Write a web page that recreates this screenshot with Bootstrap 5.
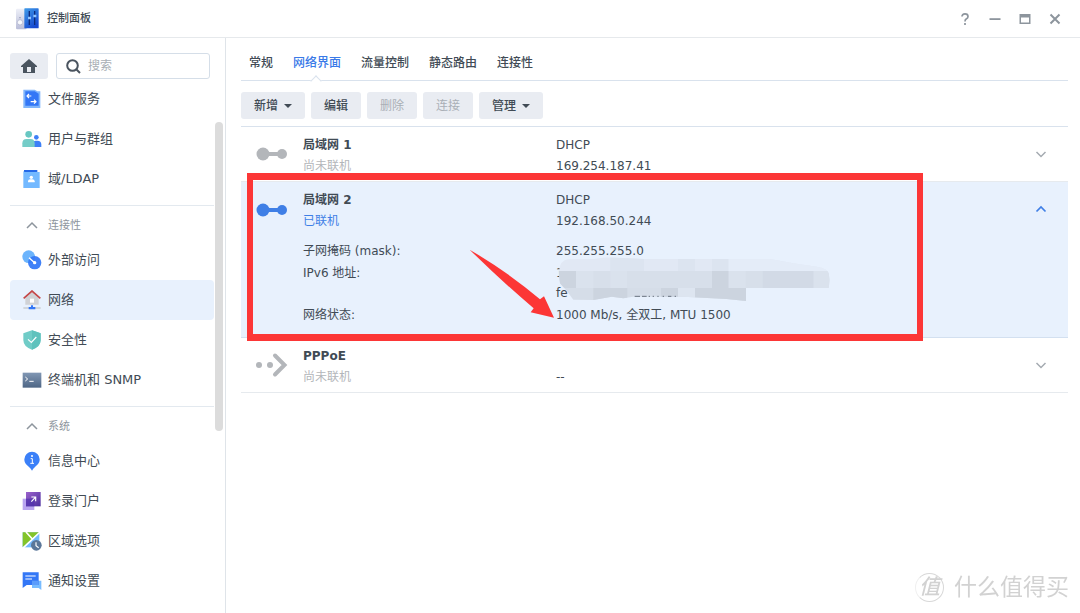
<!DOCTYPE html>
<html lang="zh-CN">
<head>
<meta charset="utf-8">
<meta name="viewport" content="width=device-width, initial-scale=1">
<title>控制面板</title>
<link href="https://cdn.jsdelivr.net/npm/bootstrap@5.3.0/dist/css/bootstrap.min.css" rel="stylesheet">
<style>
  body { font-family: "DejaVu Sans", "Noto Sans CJK SC", sans-serif; font-size: 12px; line-height: 20px; color: #414b55; background: #fff; }
  svg { display: block; flex: none; }
  button { color: inherit; }
  a { color: inherit; text-decoration: none; }

  /* title bar */
  .titlebar { height: 38px; border-bottom: 1px solid #e6e9ec; padding: 0 15px; }
  .titlebar h1 { font-size: 11px; font-weight: 500; line-height: 20px; }
  .win-btns { gap: 10px; }
  .win-btn { width: 20px; height: 20px; padding: 0; border: 0; background: none; color: #8d959d; display: grid; place-items: center; }

  /* sidebar */
  .sidebar { width: 226px; border-right: 1px solid #dfe4e9; padding: 15px 11px 12px 10px; }
  .home-btn { width: 38px; height: 26px; border: 0; border-radius: 3px; background: #e9ecf2; padding: 0; display: grid; place-items: center; flex: none; }
  .search-box { height: 26px; border: 1px solid #d5dee8; border-radius: 3px; padding: 0 9px; margin-right: 4px; gap: 7px; min-width: 0; }
  .search-box input { border: 0; outline: 0; padding: 0; width: 100%; min-width: 0; font-size: 12px; background: none; }
  .search-box input::placeholder { color: #a9afb5; opacity: 1; }
  .side-item { height: 40px; padding: 0 12px; gap: 6px; border-radius: 4px; font-size: 13px; }
  .side-item.current { background: #e8f1fd; }
  .side-group { border-top: 1px solid #e3e9ef; margin-top: 6px; padding-top: 2px; }
  .side-toggle { height: 32px; padding: 4px 15px 0; gap: 9px; border: 0; background: none; font-size: 11px; color: #8d959d; }
  .scroll-thumb { right: 2px; top: 84px; width: 8px; height: 309px; border-radius: 4px; background: #dcdcdc; }

  /* main pane */
  .pane { padding: 0 12px 0 15px; }
  .tabs { height: 43px; border-bottom: 1px solid #d9e2ed; padding: 0 8px; gap: 20px; font-size: 12px; font-weight: 500; }
  .tabs a { line-height: 20px; padding: 15px 0 7px; }
  .tabs a.current { color: #3a7ae8; }
  .tabs a.current::after { content: ""; position: absolute; left: 50%; bottom: -5px; width: 8px; height: 8px; margin-left: -5px; background: #fff; border: solid #d9e2ed; border-width: 1px 0 0 1px; transform: rotate(45deg); }
  .tools { padding: 11px 0 7px; gap: 6px; border-bottom: 1px solid #d9e2ed; }
  .tool-btn { height: 27px; padding: 0 13px; border: 0; border-radius: 3px; background: #e9ecf2; color: #414b55; font-size: 12px; line-height: 20px; font-weight: 500; }
  .tool-btn:disabled { color: #a9afb6; background: #e9ecf2; opacity: 1; font-weight: 400; }
  .tool-btn.dropdown-toggle::after { margin-left: 6px; vertical-align: 2px; border-width: 4px 4px 0; }

  .iface { border-bottom: 1px solid #e6eaee; padding: 8px 0 4px; }
  .iface.open { background: #e8f1fd; border-color: #d3e0f0; padding-bottom: 12px; }
  .iface-grid { display: grid; grid-template-columns: 62px 253fr 512fr; line-height: 21px; }
  .iface h2 { font-size: 12px; line-height: 21px; font-weight: 700; }
  .iface-icon { margin: 4px 0 0 15px; }
  .off { color: #b3b6ba; }
  .chev { border: 0; background: none; padding: 0; width: 14px; height: 14px; margin: 12px 20px 0 0; color: #a5abb1; }
  .on { color: #3f7fe6; }
  .details { margin: 9px 0 0; line-height: 20px; row-gap: 2px; }
  .details dt { grid-column: 2; font-weight: 400; }
  .details dd { grid-column: 3; margin: 0; }

  /* annotations lying over the list */
  .marker { left: 6px; right: 145px; top: -9px; bottom: -4px; border: 6px solid #fc3636; border-width: 7px 6px; z-index: 2; pointer-events: none; }
  .arrow { left: -87px; top: -56px; z-index: 2; }
  .smudge { left: 2px; top: -8px; }
  .watermark { right: 11px; bottom: 10px; gap: 10px; color: #d2d2d2; font-size: 23px; line-height: 32px; }
  .watermark-seal { width: 29px; height: 29px; border: 1px solid #d8d8d8; border-left-color: #f0f0f0; border-radius: 50%; font-size: 21px; line-height: 26px; font-style: italic; font-weight: 500; }
</style>
</head>
<body class="d-flex flex-column min-vh-100">

<header class="titlebar d-flex align-items-center">
  <svg width="24" height="24" viewBox="0 0 72 72" class="me-2" aria-hidden="true">
    <defs><linearGradient id="gPanel" x2="0.6" y2="1"><stop offset="0" stop-color="#3f9be8"/><stop offset="1" stop-color="#1648d0"/></linearGradient>
    <linearGradient id="gSide" x2="0" y2="1"><stop offset="0" stop-color="#eef0f8"/><stop offset="1" stop-color="#b9bdd8"/></linearGradient></defs>
    <rect x="3" y="5" width="32" height="62" rx="4" fill="url(#gSide)"/>
    <rect x="28" y="4" width="43" height="60" rx="2" fill="url(#gPanel)"/>
    <circle cx="15" cy="46" r="8" fill="#f7f8fc" stroke="#a9adc8" stroke-width="2"/><circle cx="15" cy="32" r="2" fill="#8085a8"/>
    <path d="M43 12v42M59 12v42" stroke="#0c2c7c" stroke-width="4"/>
    <path d="M39 33h9M55 27h9" stroke="#8fc4ff" stroke-width="7"/>
  </svg>
  <h1 class="m-0">控制面板</h1>
  <div class="win-btns d-flex ms-auto">
    <button class="win-btn" aria-label="帮助"><svg width="12" height="12" viewBox="0 0 12 12" fill="none" stroke="currentColor" stroke-width="1.7"><path d="M3 3.600Q3 .9 6 .9t3 2.600Q9 5 7.500 5.800 6 6.600 6 8.400M6 10v2"/></svg></button>
    <button class="win-btn" aria-label="最小化"><svg width="12" height="12" viewBox="0 0 12 12"><path d="M.5 5.200h11v1.800H.5z" fill="currentColor"/></svg></button>
    <button class="win-btn" aria-label="最大化"><svg width="12" height="12" viewBox="0 0 12 12"><path fill="currentColor" fill-rule="evenodd" d="M.5 1h11v10H.5zM2 4.500v5h8v-5z"/></svg></button>
    <button class="win-btn" aria-label="关闭"><svg width="12" height="12" viewBox="0 0 12 12" stroke="currentColor" stroke-width="2"><path d="M1.500 1.500l9 9M10.500 1.500l-9 9"/></svg></button>
  </div>
</header>

<div class="d-flex flex-grow-1">
  <aside class="sidebar flex-shrink-0 position-relative">
    <div class="d-flex">
      <button class="home-btn me-2" aria-label="主页"><svg width="16" height="14" viewBox="0 0 48 42"><path fill="#4a545f" fill-rule="evenodd" d="M24 0 48 21v3h-6v18H6V24H0v-3zM18 24v15h12V24z"/></svg></button>
      <label class="search-box d-flex align-items-center flex-grow-1">
        <svg width="15" height="15" viewBox="0 0 15 15" fill="none" stroke="#4a545f" stroke-width="2" role="img" aria-label="搜索"><circle cx="6.500" cy="6.500" r="5.300"/><path d="M10.500 10.500l3.500 3.500"/></svg>
        <input type="text" placeholder="搜索">
      </label>
    </div>

    <nav>
      <a href="#" class="side-item d-flex align-items-center">
        <svg width="20" height="20" viewBox="0 0 60 60"><path d="M4 2h34l8 5h9v50H4z" fill="#7fb5fb"/><path d="M10 7h28l12 7v36H10z" fill="#3377f6"/><path d="M28 21H16m5-6-6 6 6 6M26 38h15m-5-6 6 6-6 6" fill="none" stroke="#fff" stroke-width="3.500"/></svg>
        文件服务</a>
      <a href="#" class="side-item d-flex align-items-center">
        <svg width="20" height="20" viewBox="0 0 60 60"><circle cx="43" cy="25" r="7" fill="#3d80f7"/><path d="M30 54V46q0-11 12-11h4q12 0 12 12v7z" fill="#3d80f7"/><circle cx="20" cy="16" r="10" fill="#68c7c2"/><path d="M1 54V43q0-13 13-13h11q13 0 13 13v11z" fill="#75cdc8"/></svg>
        用户与群组</a>
      <a href="#" class="side-item d-flex align-items-center">
        <svg width="20" height="20" viewBox="0 0 60 60"><path d="M6 3h40v7H6z" fill="#2469e8"/><path d="M4 6q2 3 5 3h44v48H4z" fill="#73b9ff"/><circle cx="28" cy="25" r="5" fill="#fff"/><path d="M18 40v-3q0-6 7-6h6q7 0 7 6v3z" fill="#fff"/></svg>
        域/LDAP</a>

      <div class="side-group">
        <button class="side-toggle d-flex align-items-center w-100"><svg width="14" height="10" viewBox="0 0 14 10" fill="none" stroke="currentColor" stroke-width="1.500"><path d="M2 7l5-5 5 5"/></svg>连接性</button>
        <a href="#" class="side-item d-flex align-items-center">
          <svg width="20" height="20" viewBox="0 0 60 60"><circle cx="20" cy="20" r="19" fill="#6cb4fc"/><circle cx="38" cy="38" r="20" fill="#3377f6" fill-opacity=".93"/><circle cx="38" cy="38" r="5" fill="#fff"/><path d="M21 23l15 14" stroke="#fff" stroke-width="4"/></svg>
          外部访问</a>
        <a href="#" class="side-item current d-flex align-items-center" aria-current="page">
          <svg width="20" height="20" viewBox="0 0 60 60"><path d="M30 7 50 24v20H10V24z" fill="#d0d2d6"/><path d="M24 26h12v12H24z" fill="#fff"/><path d="M5 25 30 3l25 22" fill="none" stroke="#c44747" stroke-width="5"/><path d="M4 54h52" stroke="#ccd0d6" stroke-width="5"/><path d="M27 46h6v5h7v7H20v-7h7z" fill="#3377f6"/></svg>
          网络</a>
        <a href="#" class="side-item d-flex align-items-center">
          <svg width="20" height="20" viewBox="0 0 60 60"><path d="M30 1 56 10v20q0 20-26 29Q4 50 4 30V10z" fill="#70ccc7"/><path d="M30 1 56 10v20q0 20-26 29z" fill="#5fc2bd"/><path d="M18 28l10 9 15-16" fill="none" stroke="#fff" stroke-width="3.500"/></svg>
          安全性</a>
        <a href="#" class="side-item d-flex align-items-center">
          <svg width="20" height="20" viewBox="0 0 60 60"><defs><linearGradient id="gTerm" x2="0" y2="1"><stop offset="0" stop-color="#8197b4"/><stop offset="1" stop-color="#4e6685"/></linearGradient></defs><path d="M2 8h56v45H2z" fill="url(#gTerm)"/><path d="M10 21l7 6-7 6M22 34h13" fill="none" stroke="#fff" stroke-width="3"/></svg>
          终端机和 SNMP</a>
      </div>

      <div class="side-group">
        <button class="side-toggle d-flex align-items-center w-100"><svg width="14" height="10" viewBox="0 0 14 10" fill="none" stroke="currentColor" stroke-width="1.500"><path d="M2 7l5-5 5 5"/></svg>系统</button>
        <a href="#" class="side-item d-flex align-items-center">
          <svg width="20" height="20" viewBox="0 0 60 60"><path d="M30 2a23 23 0 0 1 23 23c0 12-8 18-14 23q-6 5-9 11-3-6-9-11C15 43 7 37 7 25A23 23 0 0 1 30 2z" fill="#3b80f8"/><circle cx="30" cy="15" r="3" fill="#fff"/><path d="M26 23h5v14M25 37h11" fill="none" stroke="#fff" stroke-width="3"/></svg>
          信息中心</a>
        <a href="#" class="side-item d-flex align-items-center">
          <svg width="20" height="20" viewBox="0 0 60 60"><defs><linearGradient id="gPortal" x2="1" y2="1"><stop offset="0" stop-color="#9b62cc"/><stop offset="1" stop-color="#4b2f9e"/></linearGradient></defs><path d="M2 23h35v34H2z" fill="#b9a5f0"/><path d="M12 3h44v43H12z" fill="url(#gPortal)"/><path d="M12 23h25v23H12z" fill="#4a2fae" fill-opacity=".6"/><path d="M28 32l12-13M28 18h13v13" fill="none" stroke="#fff" stroke-width="3.500"/></svg>
          登录门户</a>
        <a href="#" class="side-item d-flex align-items-center">
          <svg width="20" height="20" viewBox="0 0 60 60"><path d="M2 4h50v45H2z" fill="#74baff"/><path d="M2 4h50L2 49z" fill="#83c42a"/><path d="M2 52 54 3M12 3l19 21" stroke="#fff" stroke-width="5"/><circle cx="43" cy="43" r="16" fill="#5b7799"/><path d="M42 34v10l8 6" fill="none" stroke="#fff" stroke-width="3.500"/></svg>
          区域选项</a>
        <a href="#" class="side-item d-flex align-items-center">
          <svg width="20" height="20" viewBox="0 0 60 60"><path d="M30 29h28v28l-8-6H30z" fill="#78bcff"/><path d="M2 4h48v38H14L2 51z" fill="#3377f6"/><path d="M30 29h20v13H30z" fill="#5b9cfb"/><path d="M10 15h31M10 24h20" stroke="#fff" stroke-width="3.500"/></svg>
          通知设置</a>
      </div>
    </nav>
    <div class="scroll-thumb position-absolute"></div>
  </aside>

  <main class="pane flex-grow-1">
    <nav class="tabs d-flex">
      <a href="#">常规</a>
      <a href="#" class="current position-relative" aria-current="page">网络界面</a>
      <a href="#">流量控制</a>
      <a href="#">静态路由</a>
      <a href="#">连接性</a>
    </nav>

    <div class="tools d-flex">
      <button class="btn tool-btn dropdown-toggle">新增</button>
      <button class="btn tool-btn">编辑</button>
      <button class="btn tool-btn" disabled>删除</button>
      <button class="btn tool-btn" disabled>连接</button>
      <button class="btn tool-btn dropdown-toggle">管理</button>
    </div>

    <section class="iface">
      <div class="iface-grid">
        <svg class="iface-icon off" width="32" height="32" viewBox="0 0 32 32" fill="currentColor"><circle cx="7" cy="15" r="6.500"/><circle cx="26" cy="15" r="5"/><path d="M7 13h19v4H7z"/></svg>
        <div><h2 class="m-0">局域网 1</h2><div class="off">尚未联机</div></div>
        <div class="d-flex justify-content-between">
          <div>DHCP<br>169.254.187.41</div>
          <button class="chev" aria-label="展开"><svg width="14" height="14" viewBox="0 0 14 14" fill="none" stroke="currentColor" stroke-width="1.500"><path d="M2.500 5 7 9.500 11.500 5"/></svg></button>
        </div>
      </div>
    </section>

    <section class="iface open position-relative">
      <div class="iface-grid">
        <svg class="iface-icon on" width="32" height="32" viewBox="0 0 32 32" fill="currentColor"><circle cx="7" cy="16" r="6.500"/><circle cx="26" cy="16" r="5"/><path d="M7 14h19v4H7z"/></svg>
        <div><h2 class="m-0">局域网 2</h2><div class="on">已联机</div></div>
        <div class="d-flex justify-content-between">
          <div>DHCP<br>192.168.50.244</div>
          <button class="chev on" aria-label="收起"><svg width="14" height="14" viewBox="0 0 14 14" fill="none" stroke="currentColor" stroke-width="1.700"><path d="M2.500 9.500 7 5l4.500 4.500"/></svg></button>
        </div>
      </div>
      <dl class="details iface-grid">
        <dt>子网掩码 (mask):</dt><dd>255.255.255.0</dd>
        <dt>IPv6 地址:</dt>
        <dd class="position-relative">1<br>fe
          <svg class="smudge position-absolute" width="272" height="46" viewBox="54 390 816 138" aria-hidden="true">
            <defs><clipPath id="cSmudge"><path d="M56 440Q60 405 85 403L160 402 200 397 310 402H690L760 415 830 425Q862 430 866 445L869 465 866 489H618V528L560 522 430 515H280L250 520 215 515 160 525 100 524Q84 500 60 475z"/></clipPath></defs>
            <g clip-path="url(#cSmudge)">
              <path d="M50 390h820v48H50z" fill="#e1e8f4"/><path d="M211 390h101v48H211zM414 390h51v48h-51zM516 390h50v48h-50z" fill="#dce4f0"/><path d="M566 390h304v48H566z" fill="#e4ecf8"/>
              <path d="M50 438h820v51H50z" fill="#d7dfea"/><path d="M50 438h58v51H50zM516 438h50v51h-50z" fill="#ccd4df"/><path d="M108 438h52v51h-52zM211 438h50v51h-50zM566 438h51v51h-51zM820 438h50v51h-50z" fill="#dae2ed"/><path d="M668 438h152v51H668z" fill="#d2dae6"/>
              <path d="M50 489h568v41H50z" fill="#d5dde8"/><path d="M160 489h102v41H160zM363 489h51v41h-51zM465 489h153v41H465z" fill="#ccd4df"/><path d="M414 489h51v41h-51z" fill="#dde5f0"/>
            </g>
            <path d="M284 514h16M306 514h14M326 514h4M338 514h4M352 514h4M368 514h4M384 514h10M404 514h4" stroke="#697480" stroke-width="3"/>
          </svg>
        </dd>
        <dt>网络状态:</dt>
        <dd class="position-relative">1000 Mb/s, 全双工, MTU 1500
          <svg class="arrow position-absolute" width="86" height="69" viewBox="717 58 258 207" aria-hidden="true"><path fill="#fc3636" d="M719 60Q835 128 930 209L942 200 972 264 902 248 911 236Q810 150 719 60z"/></svg>
        </dd>
      </dl>
      <div class="marker position-absolute"></div>
    </section>

    <section class="iface">
      <div class="iface-grid">
        <svg class="iface-icon off" width="32" height="32" viewBox="0 0 32 32"><g fill="currentColor"><circle cx="3" cy="15" r="3"/><circle cx="14" cy="15" r="3"/></g><path d="M19 5.500 28.500 15 19 24.500" fill="none" stroke="currentColor" stroke-width="4" stroke-linecap="round"/></svg>
        <div><h2 class="m-0">PPPoE</h2><div class="off">尚未联机</div></div>
        <div class="d-flex justify-content-between">
          <div><br>--</div>
          <button class="chev" aria-label="展开"><svg width="14" height="14" viewBox="0 0 14 14" fill="none" stroke="currentColor" stroke-width="1.500"><path d="M2.500 5 7 9.500 11.500 5"/></svg></button>
        </div>
      </div>
    </section>
  </main>
</div>

<div class="watermark position-fixed d-flex align-items-center">
  <span class="watermark-seal text-center">值</span><span>什么值得买</span>
</div>

<script src="https://cdn.jsdelivr.net/npm/bootstrap@5.3.0/dist/js/bootstrap.bundle.min.js"></script>
</body>
</html>
